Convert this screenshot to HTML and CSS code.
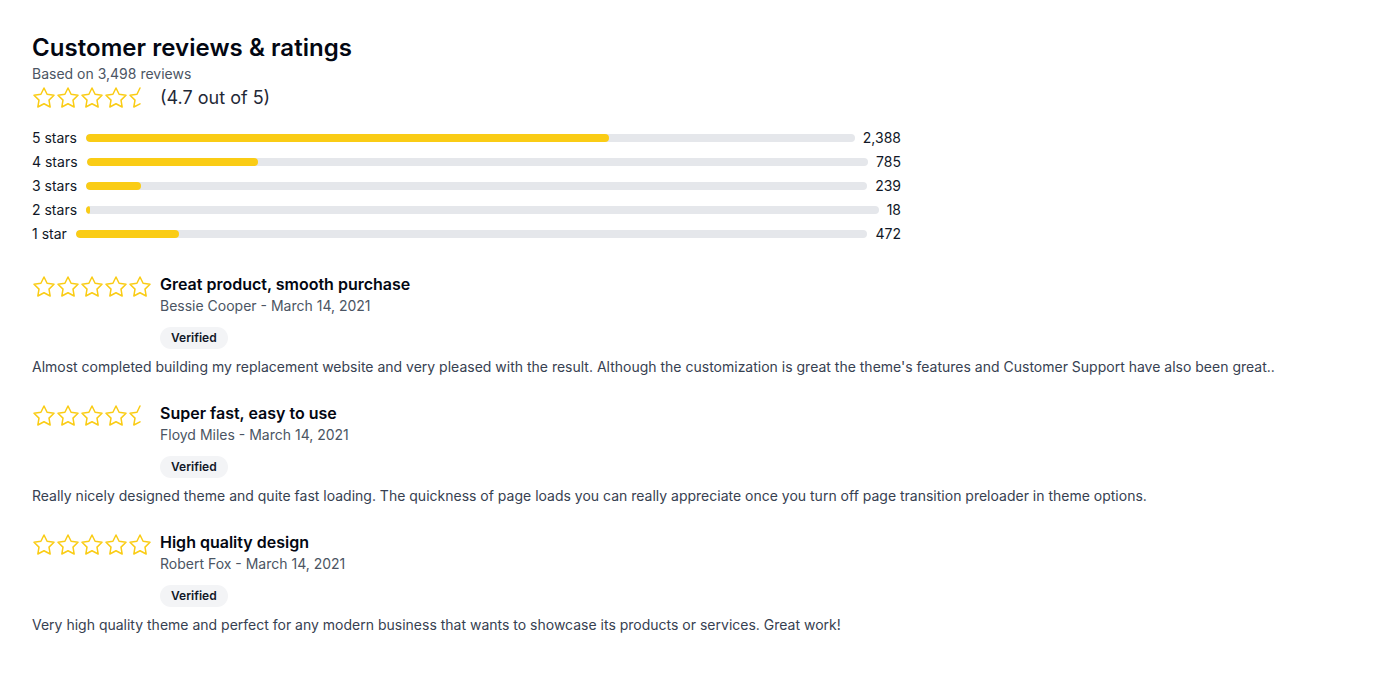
FILE: index.html
```html
<!DOCTYPE html>
<html lang="en">
<head>
<meta charset="utf-8">
<title>Customer reviews</title>
<link rel="stylesheet" href="styles.css">
</head>
<body>
<main class="page">
  <section class="summary">
    <h2 class="title">Customer reviews &amp; ratings</h2>
    <p class="based">Based on 3,498 reviews</p>
    <div class="overall">
      <div class="stars">
        <svg class="star" viewBox="0 0 24 24"><polygon points="12 2 15.09 8.26 22 9.27 17 14.14 18.18 21.02 12 17.77 5.82 21.02 7 14.14 2 9.27 8.91 8.26 12 2"/></svg>
        <svg class="star" viewBox="0 0 24 24"><polygon points="12 2 15.09 8.26 22 9.27 17 14.14 18.18 21.02 12 17.77 5.82 21.02 7 14.14 2 9.27 8.91 8.26 12 2"/></svg>
        <svg class="star" viewBox="0 0 24 24"><polygon points="12 2 15.09 8.26 22 9.27 17 14.14 18.18 21.02 12 17.77 5.82 21.02 7 14.14 2 9.27 8.91 8.26 12 2"/></svg>
        <svg class="star" viewBox="0 0 24 24"><polygon points="12 2 15.09 8.26 22 9.27 17 14.14 18.18 21.02 12 17.77 5.82 21.02 7 14.14 2 9.27 8.91 8.26 12 2"/></svg>
        <svg class="star" viewBox="0 0 24 24"><path d="M12 17.8 5.8 21 7 14.1 2 9.3l7-1L12 2"/></svg>
      </div>
      <span class="score">(4.7 out of 5)</span>
    </div>
    <div class="bars">
      <div class="bar-row"><span class="bar-label">5 stars</span><div class="track"><div class="fill" style="width:68%"></div></div><span class="bar-count">2,388</span></div>
      <div class="bar-row"><span class="bar-label">4 stars</span><div class="track"><div class="fill" style="width:22%"></div></div><span class="bar-count">785</span></div>
      <div class="bar-row"><span class="bar-label">3 stars</span><div class="track"><div class="fill" style="width:7%"></div></div><span class="bar-count">239</span></div>
      <div class="bar-row"><span class="bar-label">2 stars</span><div class="track"><div class="fill" style="width:0.5%"></div></div><span class="bar-count">18</span></div>
      <div class="bar-row"><span class="bar-label">1 star</span><div class="track"><div class="fill" style="width:13%"></div></div><span class="bar-count">472</span></div>
    </div>
  </section>

  <section class="reviews">
    <article class="review">
      <div class="review-head">
        <div class="stars review-stars">
          <svg class="star" viewBox="0 0 24 24"><polygon points="12 2 15.09 8.26 22 9.27 17 14.14 18.18 21.02 12 17.77 5.82 21.02 7 14.14 2 9.27 8.91 8.26 12 2"/></svg>
          <svg class="star" viewBox="0 0 24 24"><polygon points="12 2 15.09 8.26 22 9.27 17 14.14 18.18 21.02 12 17.77 5.82 21.02 7 14.14 2 9.27 8.91 8.26 12 2"/></svg>
          <svg class="star" viewBox="0 0 24 24"><polygon points="12 2 15.09 8.26 22 9.27 17 14.14 18.18 21.02 12 17.77 5.82 21.02 7 14.14 2 9.27 8.91 8.26 12 2"/></svg>
          <svg class="star" viewBox="0 0 24 24"><polygon points="12 2 15.09 8.26 22 9.27 17 14.14 18.18 21.02 12 17.77 5.82 21.02 7 14.14 2 9.27 8.91 8.26 12 2"/></svg>
          <svg class="star" viewBox="0 0 24 24"><polygon points="12 2 15.09 8.26 22 9.27 17 14.14 18.18 21.02 12 17.77 5.82 21.02 7 14.14 2 9.27 8.91 8.26 12 2"/></svg>
        </div>
        <div class="review-meta">
          <h3 class="review-title">Great product, smooth purchase</h3>
          <p class="review-author">Bessie Cooper - March 14, 2021</p>
          <span class="badge">Verified</span>
        </div>
      </div>
      <p class="review-body">Almost completed building my replacement website and very pleased with the result. Although the customization is great the theme's features and Customer Support have also been great..</p>
    </article>

    <article class="review">
      <div class="review-head">
        <div class="stars review-stars">
          <svg class="star" viewBox="0 0 24 24"><polygon points="12 2 15.09 8.26 22 9.27 17 14.14 18.18 21.02 12 17.77 5.82 21.02 7 14.14 2 9.27 8.91 8.26 12 2"/></svg>
          <svg class="star" viewBox="0 0 24 24"><polygon points="12 2 15.09 8.26 22 9.27 17 14.14 18.18 21.02 12 17.77 5.82 21.02 7 14.14 2 9.27 8.91 8.26 12 2"/></svg>
          <svg class="star" viewBox="0 0 24 24"><polygon points="12 2 15.09 8.26 22 9.27 17 14.14 18.18 21.02 12 17.77 5.82 21.02 7 14.14 2 9.27 8.91 8.26 12 2"/></svg>
          <svg class="star" viewBox="0 0 24 24"><polygon points="12 2 15.09 8.26 22 9.27 17 14.14 18.18 21.02 12 17.77 5.82 21.02 7 14.14 2 9.27 8.91 8.26 12 2"/></svg>
          <svg class="star" viewBox="0 0 24 24"><path d="M12 17.8 5.8 21 7 14.1 2 9.3l7-1L12 2"/></svg>
        </div>
        <div class="review-meta">
          <h3 class="review-title">Super fast, easy to use</h3>
          <p class="review-author">Floyd Miles - March 14, 2021</p>
          <span class="badge">Verified</span>
        </div>
      </div>
      <p class="review-body">Really nicely designed theme and quite fast loading. The quickness of page loads you can really appreciate once you turn off page transition preloader in theme options.</p>
    </article>

    <article class="review">
      <div class="review-head">
        <div class="stars review-stars">
          <svg class="star" viewBox="0 0 24 24"><polygon points="12 2 15.09 8.26 22 9.27 17 14.14 18.18 21.02 12 17.77 5.82 21.02 7 14.14 2 9.27 8.91 8.26 12 2"/></svg>
          <svg class="star" viewBox="0 0 24 24"><polygon points="12 2 15.09 8.26 22 9.27 17 14.14 18.18 21.02 12 17.77 5.82 21.02 7 14.14 2 9.27 8.91 8.26 12 2"/></svg>
          <svg class="star" viewBox="0 0 24 24"><polygon points="12 2 15.09 8.26 22 9.27 17 14.14 18.18 21.02 12 17.77 5.82 21.02 7 14.14 2 9.27 8.91 8.26 12 2"/></svg>
          <svg class="star" viewBox="0 0 24 24"><polygon points="12 2 15.09 8.26 22 9.27 17 14.14 18.18 21.02 12 17.77 5.82 21.02 7 14.14 2 9.27 8.91 8.26 12 2"/></svg>
          <svg class="star" viewBox="0 0 24 24"><polygon points="12 2 15.09 8.26 22 9.27 17 14.14 18.18 21.02 12 17.77 5.82 21.02 7 14.14 2 9.27 8.91 8.26 12 2"/></svg>
        </div>
        <div class="review-meta">
          <h3 class="review-title">High quality design</h3>
          <p class="review-author">Robert Fox - March 14, 2021</p>
          <span class="badge">Verified</span>
        </div>
      </div>
      <p class="review-body">Very high quality theme and perfect for any modern business that wants to showcase its products or services. Great work!</p>
    </article>
  </section>
</main>
</body>
</html>
```

FILE: styles.css
```css
* { box-sizing: border-box; }

html, body {
  margin: 0;
  padding: 0;
  background: #ffffff;
}

body {
  font-family: Inter, "Noto Sans", sans-serif;
  color: #111827;
}

.page {
  padding: 32px 32px;
}

.title {
  margin: 0;
  font-size: 24px;
  line-height: 32px;
  font-weight: 600;
  letter-spacing: 0.05px;
  color: #030712;
}

.based {
  margin: 0;
  font-size: 14px;
  line-height: 20px;
  color: #4b5563;
}

.overall {
  display: flex;
  align-items: center;
  gap: 8px;
  height: 28px;
}

.stars {
  display: flex;
  flex: none;
  width: 120px;
}

.star {
  width: 24px;
  height: 24px;
  flex: none;
  fill: none;
  stroke: #facc15;
  stroke-width: 1.5;
  stroke-linejoin: round;
  stroke-linecap: round;
}

.score {
  font-size: 18px;
  line-height: 28px;
  color: #1f2937;
}

.bars {
  margin-top: 16px;
  width: 869px;
  display: flex;
  flex-direction: column;
  gap: 4px;
}

.bar-row {
  display: flex;
  align-items: center;
  gap: 8px;
  height: 20px;
  font-size: 14px;
  line-height: 20px;
  color: #111827;
}

.bar-label {
  flex: none;
  padding-right: 1px;
}
.bar-count { flex: none; }

.track {
  flex: 1;
  height: 8px;
  border-radius: 4px;
  background: #e5e7eb;
  overflow: hidden;
}

.fill {
  height: 100%;
  border-radius: 4px;
  background: #facc15;
}

.reviews {
  margin-top: 28px;
  display: flex;
  flex-direction: column;
  gap: 24px;
}

.review-head {
  display: flex;
  gap: 8px;
  align-items: flex-start;
}

.review-stars {
  margin-top: 3px;
}

.review-meta {
  display: flex;
  flex-direction: column;
  align-items: flex-start;
}

.review-title {
  margin: 0;
  font-size: 16px;
  line-height: 24px;
  font-weight: 600;
  color: #030712;
}

.review-author {
  margin: 0;
  font-size: 14px;
  line-height: 20px;
  color: #4b5563;
}

.badge {
  margin-top: 11px;
  padding: 3px 11px;
  font-size: 12px;
  line-height: 16px;
  font-weight: 600;
  color: #111827;
  background: #f3f4f6;
  border-radius: 9999px;
}

.review-body {
  margin: 8px 0 0;
  font-size: 14px;
  line-height: 20px;
  color: #374151;
}
```
